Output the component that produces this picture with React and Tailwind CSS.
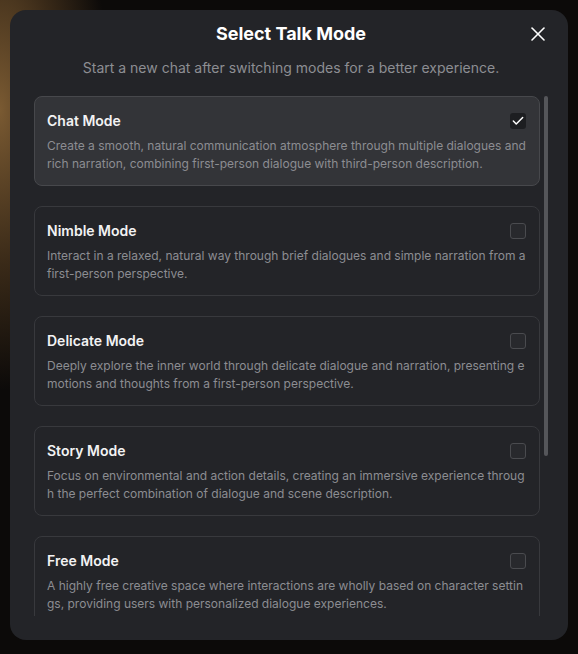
import React, { useState } from "react";
import { X, Check } from "lucide-react";

const modes = [
  {
    id: "chat",
    title: "Chat Mode",
    desc: "Create a smooth, natural communication atmosphere through multiple dialogues and rich narration, combining first-person dialogue with third-person description.",
  },
  {
    id: "nimble",
    title: "Nimble Mode",
    desc: "Interact in a relaxed, natural way through brief dialogues and simple narration from a first-person perspective.",
  },
  {
    id: "delicate",
    title: "Delicate Mode",
    desc: "Deeply explore the inner world through delicate dialogue and narration, presenting emotions and thoughts from a first-person perspective.",
  },
  {
    id: "story",
    title: "Story Mode",
    desc: "Focus on environmental and action details, creating an immersive experience through the perfect combination of dialogue and scene description.",
  },
  {
    id: "free",
    title: "Free Mode",
    desc: "A highly free creative space where interactions are wholly based on character settings, providing users with personalized dialogue experiences.",
  },
];

const App = () => {
  const [selected, setSelected] = useState("chat");

  return (
    <div
      className="w-[578px] h-[654px] overflow-hidden bg-[radial-gradient(ellipse_110px_280px_at_0px_110px,#7a5a32_0%,#3a2a18_55%,#0c0a09_100%)] p-[10px]"
      style={{ fontFamily: "Inter, 'Noto Sans', sans-serif" }}
    >
      <div className="flex h-[630px] w-[558px] flex-col rounded-[16px] bg-[#232428] pt-[12px] pb-[24px] pl-[24px] pr-[20px]">
        {/* header */}
        <div className="relative flex items-center justify-center">
          <h1 className="text-[18px] font-bold leading-[24px] text-white">
            Select Talk Mode
          </h1>
          <button className="absolute right-[-2px] top-0 flex h-6 w-6 items-center justify-center text-white">
            <X size={24} strokeWidth={1.6} />
          </button>
        </div>
        <p className="mt-[12px] text-center text-[14px] leading-[20px] text-[#8d8e93]">
          Start a new chat after switching modes for a better experience.
        </p>

        {/* list */}
        <div className="mt-[18px] flex h-[520px] gap-[4px]">
          <div className="flex w-[506px] flex-col gap-[20px] overflow-hidden">
            {modes.map((mode) => {
              const active = selected === mode.id;
              return (
                <div
                  key={mode.id}
                  onClick={() => setSelected(mode.id)}
                  className={`shrink-0 cursor-pointer rounded-lg border px-[12px] pt-[14px] pb-[12px] ${
                    active
                      ? "border-[#47484c] bg-[#333438]"
                      : "border-[#38393d] bg-[#232428]"
                  }`}
                >
                  <div className="flex items-center justify-between">
                    <span className="text-[14px] font-semibold leading-[20px] text-[#f2f2f3]">
                      {mode.title}
                    </span>
                    <span
                      className={`mr-[1px] flex h-[16px] w-[16px] items-center justify-center rounded-[3px] ${
                        active
                          ? "bg-[#1d1e21] text-white"
                          : "border border-[#4a4b4f] bg-[#28292d]"
                      }`}
                    >
                      {active && <Check size={14} strokeWidth={2.5} />}
                    </span>
                  </div>
                  <p className="mt-[6px] break-all text-[12px] leading-[18px] text-[#8c8d92]">
                    {mode.desc}
                  </p>
                </div>
              );
            })}
          </div>
          <div className="w-[4px]">
            <div className="h-[360px] w-[4px] rounded-full bg-[#55565a]" />
          </div>
        </div>
      </div>
    </div>
  );
};

export default App;
